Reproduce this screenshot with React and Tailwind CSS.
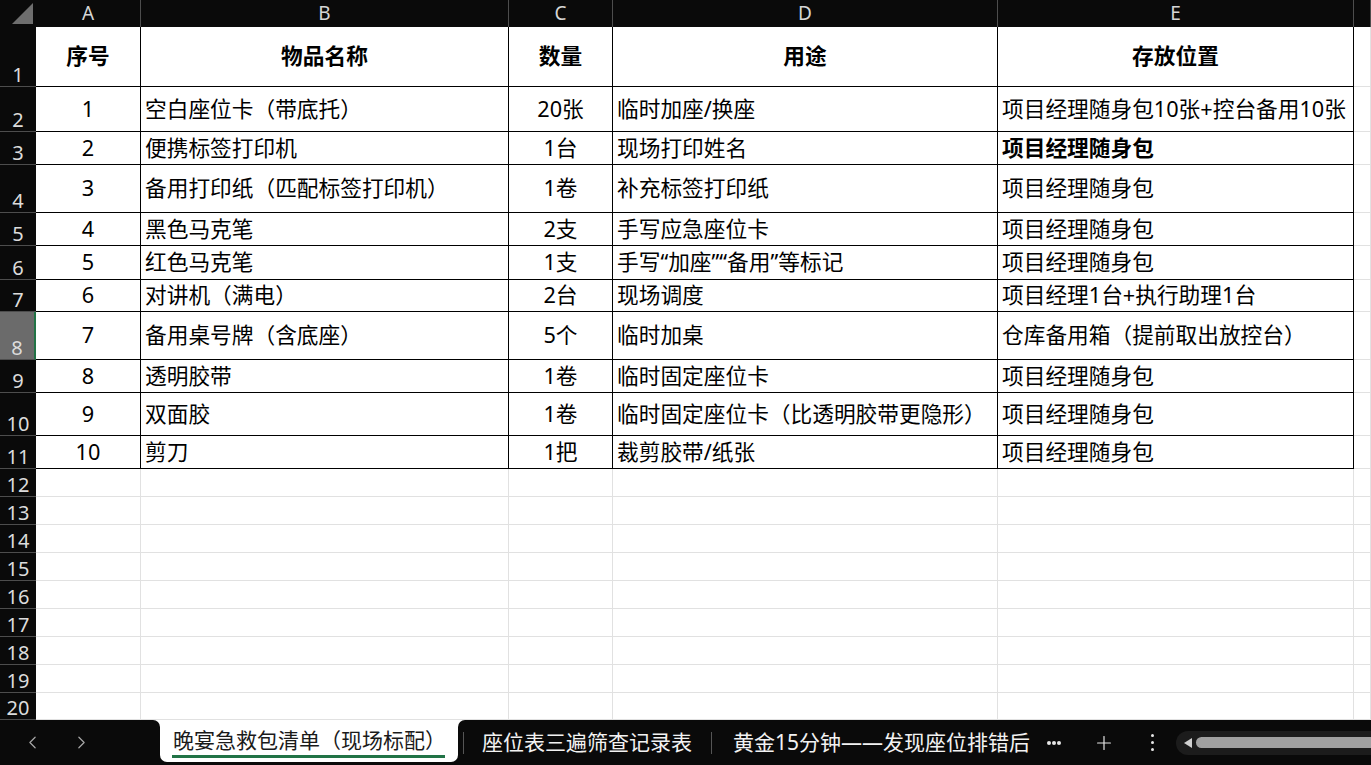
import { ChevronLeft, ChevronRight, Plus } from "lucide-react";

const cols = ["A", "B", "C", "D", "E", ""];
const rowHeights = [60, 45, 33, 48, 33, 34, 32, 48, 33, 43, 33, 28, 28, 28, 28, 28, 28, 28, 28, 27];

const header = ["序号", "物品名称", "数量", "用途", "存放位置"];

const items = [
  ["1", "空白座位卡（带底托）", "20张", "临时加座/换座", "项目经理随身包10张+控台备用10张"],
  ["2", "便携标签打印机", "1台", "现场打印姓名", "项目经理随身包"],
  ["3", "备用打印纸（匹配标签打印机）", "1卷", "补充标签打印纸", "项目经理随身包"],
  ["4", "黑色马克笔", "2支", "手写应急座位卡", "项目经理随身包"],
  ["5", "红色马克笔", "1支", "手写“加座”“备用”等标记", "项目经理随身包"],
  ["6", "对讲机（满电）", "2台", "现场调度", "项目经理1台+执行助理1台"],
  ["7", "备用桌号牌（含底座）", "5个", "临时加桌", "仓库备用箱（提前取出放控台）"],
  ["8", "透明胶带", "1卷", "临时固定座位卡", "项目经理随身包"],
  ["9", "双面胶", "1卷", "临时固定座位卡（比透明胶带更隐形）", "项目经理随身包"],
  ["10", "剪刀", "1把", "裁剪胶带/纸张", "项目经理随身包"],
];

function Cell({ r, c }) {
  const inTable = r < 11 && c < 5;
  const border = inTable ? "border-black" : "border-[#e1e1e1]";
  let text = "";
  let cls = "justify-start pl-[4px]";
  if (r === 0 && c < 5) {
    text = header[c];
    cls = "justify-center font-bold";
  } else if (r > 0 && r < 11 && c < 5) {
    text = items[r - 1][c];
    if (c === 0 || c === 2) cls = "justify-center";
    if (r === 2 && c === 4) cls += " font-bold";
  }
  return (
    <div
      className={`flex items-center overflow-hidden whitespace-nowrap border-r border-b ${border} bg-white text-[21.7px] text-black ${cls}`}
    >
      {text}
    </div>
  );
}

function Sheet() {
  return (
    <div
      className="grid"
      style={{
        gridTemplateColumns: "36px 105px 368px 104px 385px 356px 1fr",
        gridTemplateRows: ["27px", ...rowHeights.map((h) => h + "px")].join(" "),
      }}
    >
      {/* corner */}
      <div className="relative bg-[#0a0a0a]">
        <svg className="absolute left-0 top-0" width="36" height="27">
          <polygon points="33,3 33,24 12,24" fill="#6e6e6e" />
        </svg>
      </div>
      {cols.map((l, i) => (
        <div
          key={i}
          className="flex items-center justify-center border-r border-[#4d4d4d] bg-[#0a0a0a] text-[19px] text-[#d6d6d6]"
        >
          {l}
        </div>
      ))}
      {rowHeights.map((_, r) => (
        <Row key={r} r={r} />
      ))}
    </div>
  );
}

function Row({ r }) {
  const selected = r === 7;
  return (
    <>
      <div
        className={`flex items-end justify-center border-b border-[#4d4d4d] pb-[1px] text-[20px] leading-none text-[#dcdcdc] ${
          selected ? "border-r-2 border-r-[#217346] bg-[#6b6b6b]" : "bg-[#0a0a0a]"
        }`}
      >
        {r + 1}
      </div>
      {cols.map((_, c) => (
        <Cell key={c} r={r} c={c} />
      ))}
    </>
  );
}

function Dot() {
  return <div className="h-[4px] w-[4px] rounded-full bg-[#e6e6e6]" />;
}

function TabBar() {
  return (
    <div className="flex flex-1 bg-white text-[21px]">
      <div className="flex w-[160px] items-center gap-[28px] rounded-tr-[7px] bg-[#0a0a0a] pl-[22px]">
        <ChevronLeft size={21} strokeWidth={1.4} color="#a8a8a8" />
        <ChevronRight size={21} strokeWidth={1.4} color="#a8a8a8" />
      </div>
      <div className="flex w-[298px] flex-col bg-[#0a0a0a]">
        <div className="relative flex h-[42px] items-center rounded-b-[7px] bg-white pl-[13px] text-[#1a1a1a]">
          晚宴急救包清单（现场标配）
          <div className="absolute bottom-[4px] left-[12px] h-[3px] w-[273px] bg-[#217346]" />
        </div>
      </div>
      <div className="flex flex-1 items-center rounded-tl-[7px] bg-[#0a0a0a] text-[#f2f2f2]">
        <div className="ml-[5px] h-[22px] w-px bg-[#555]" />
        <span className="ml-[18px]">座位表三遍筛查记录表</span>
        <div className="ml-[19px] h-[22px] w-px bg-[#555]" />
        <span className="ml-[21px]">黄金15分钟——发现座位排错后</span>
        <div className="ml-[17px] flex gap-[1px]">
          <Dot />
          <Dot />
          <Dot />
        </div>
        <Plus className="ml-[32px]" size={22} strokeWidth={1.3} color="#e6e6e6" />
        <div className="ml-[36px] flex flex-col gap-[4px]">
          <div className="h-[3px] w-[3px] rounded-full bg-[#e6e6e6]" />
          <div className="h-[3px] w-[3px] rounded-full bg-[#e6e6e6]" />
          <div className="h-[3px] w-[3px] rounded-full bg-[#e6e6e6]" />
        </div>
        <div className="ml-[22px] flex h-[24px] flex-1 items-center rounded-l-full bg-[#1c1c1c] pl-[8px]">
          <svg width="8" height="10">
            <polygon points="8,0 8,10 0,5" fill="#d0d0d0" />
          </svg>
          <div className="ml-[4px] h-[11px] flex-1 rounded-l-full bg-[#a0a0a0]" />
        </div>
      </div>
    </div>
  );
}

export default function App() {
  return (
    <div
      className="flex h-screen flex-col overflow-hidden bg-white"
      style={{ fontFamily: '"Noto Sans", "Noto Sans CJK SC", sans-serif' }}
    >
      <Sheet />
      <TabBar />
    </div>
  );
}
